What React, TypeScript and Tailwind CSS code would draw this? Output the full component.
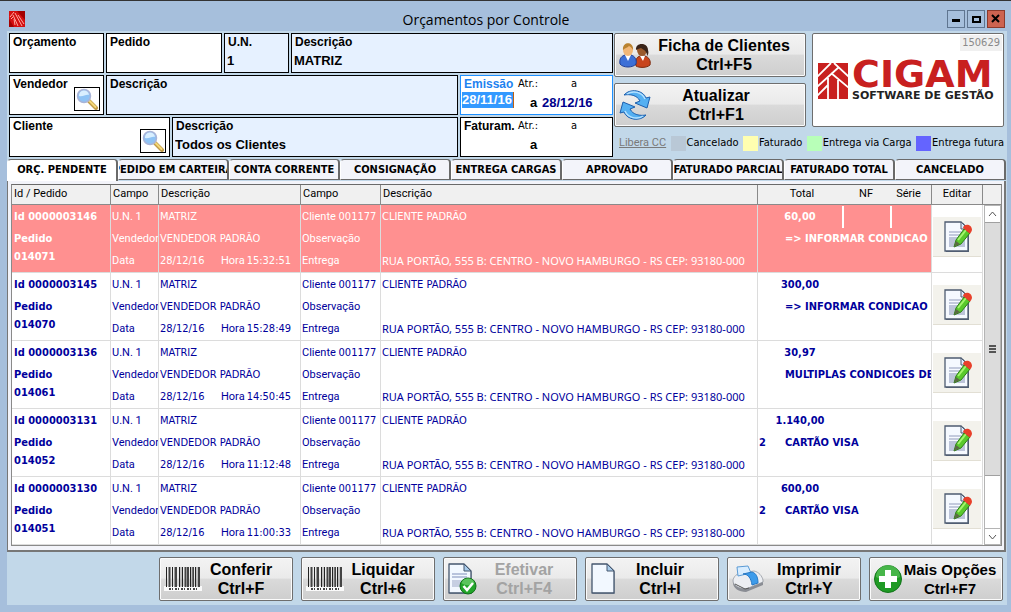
import React from 'react';

type Order = {
  id: string;
  pedido: string;
  hora: string;
  total: string;
  parcela: string;
  condicao: string;
};

const orders: Order[] = [
  { id: '0000003146', pedido: '014071', hora: '15:32:51', total: '60,00', parcela: '', condicao: '=> INFORMAR CONDICAO DE PAGAMENTO' },
  { id: '0000003145', pedido: '014070', hora: '15:28:49', total: '300,00', parcela: '', condicao: '=> INFORMAR CONDICAO DE PAGAMENTO' },
  { id: '0000003136', pedido: '014061', hora: '14:50:45', total: '30,97', parcela: '', condicao: 'MULTIPLAS CONDICOES DE PAGAMENTO' },
  { id: '0000003131', pedido: '014052', hora: '11:12:48', total: '1.140,00', parcela: '2', condicao: 'CARTÃO VISA' },
  { id: '0000003130', pedido: '014051', hora: '11:00:33', total: '600,00', parcela: '2', condicao: 'CARTÃO VISA' },
];

const tabs = [
  'ORÇ. PENDENTE',
  'PEDIDO EM CARTEIRA',
  'CONTA CORRENTE',
  'CONSIGNAÇÃO',
  'ENTREGA CARGAS',
  'APROVADO',
  'FATURADO PARCIAL',
  'FATURADO TOTAL',
  'CANCELADO',
];

const legend = [
  { label: 'Cancelado', color: 'bg-[#b9c8d6]' },
  { label: 'Faturado', color: 'bg-[#ffffb0]' },
  { label: 'Entrega via Carga', color: 'bg-[#b8ffb8]' },
  { label: 'Entrega futura', color: 'bg-[#6464ff]' },
];

/* ---------- icons ---------- */

const AppIcon = () => (
  <svg width="16" height="16" viewBox="0 0 16 16" aria-hidden="true">
    <rect width="16" height="16" fill="#d40f10" />
    <path d="M8 0l8 9V0zM0 8l5 8H0z" fill="#a30000" />
    <path d="M1 6 5 1M4 4l5 11M6 2l7 13M5 8l1 6M9 4l6 9M2 8l2-2" stroke="#ffa8a0" strokeWidth="1" fill="none" />
  </svg>
);

const SearchIcon = () => (
  <svg width="24" height="22" viewBox="0 0 24 22" aria-hidden="true">
    <path d="m14 13 7 7" stroke="#c09a48" strokeWidth="4" strokeLinecap="round" />
    <path d="m14.500 13 6 6" stroke="#f4d878" strokeWidth="2" strokeLinecap="round" />
    <circle cx="9" cy="8" r="6.500" fill="#8ec3f5" stroke="#a9b4d8" strokeWidth="1.500" />
    <path d="M4 8a5 5 0 0 1 10-1c-3-1-6 2-10 1z" fill="#d9efff" />
  </svg>
);

const PeopleIcon = () => (
  <svg width="32" height="26" viewBox="0 0 32 26" aria-hidden="true">
    <path d="M17 24c-1-7 1-9 4-10h5c4 1 6 5 5 9-3 3-11 3-14 1z" fill="#c8451d" stroke="#7d2b10" />
    <path d="m21 14 3 5 2-5z" fill="#fff" />
    <ellipse cx="23" cy="8" rx="5" ry="6" fill="#9a5a2c" />
    <path d="M17 8c-1-8 12-8 12 0 1 3 0 5-1 6 0-5-3-6-6-8-2 1-4 1-5 2z" fill="#3a2419" />
    <path d="M1 22c-1-6 2-8 5-9h6c4 1 6 5 5 9-3 4-13 4-16 0z" fill="#3c6fd6" stroke="#1f3f96" />
    <path d="m6 13 3 6 3-6z" fill="#fff" />
    <ellipse cx="9" cy="8" rx="5" ry="6" fill="#f2b777" />
    <path d="M4 8C3-1 15-1 14 8c-1-2-2-3-4-4-2 2-4 2-6 4z" fill="#b9822f" />
  </svg>
);

const RefreshIcon = () => (
  <svg width="32" height="32" viewBox="0 0 32 32" aria-hidden="true">
    <g fill="#55b0f2" stroke="#1d5fae" strokeWidth="1" strokeLinejoin="round">
      <path d="M5 6C11-1 24 1 27 9l4-1-3 11-12-5 5-2C18 6 11 5 5 6z" />
      <path d="M27 26C21 33 8 31 5 23l-4 1 3-11 12 5-5 2c3 6 10 7 16 6z" />
    </g>
    <path d="M8 5c6-4 15-2 18 5M24 27c-6 4-15 2-18-5" stroke="#b5e1ff" strokeWidth="1.500" fill="none" />
  </svg>
);

const BarcodeIcon = () => (
  <svg width="38" height="26" viewBox="0 0 38 26" className="max-w-none shrink-0" aria-hidden="true">
    <rect x="0" y="20" width="38" height="5" fill="#fafafa" />
    <path d="M2.500 1v20M8.500 1v20M15.500 1v20M18.500 1v20M26.500 1v20M31.500 1v20" stroke="#222" />
    <path d="M5.500 1v20M12 1v20M21.500 1v20M24 1v20M29 1v20M35 1v20" stroke="#444" strokeWidth="2" />
    <path d="M4.500 1v20M10.500 1v20M17 1v20M28 1v20M33 1v20" stroke="#999" />
    <path d="M5 23h28" stroke="#444" strokeWidth="2" strokeDasharray="2 1 1 2" />
  </svg>
);

const Page = () => (
  <>
    <path d="M2 2h15l7 7v22H2z" fill="#8793a3" opacity=".6" />
    <path d="M1 1h15l7 7v22H1z" fill="#f2f8ff" stroke="#44566e" strokeWidth="1.300" strokeLinejoin="round" />
    <path d="M16 1v7h7z" fill="#a8cbea" stroke="#44566e" strokeLinejoin="round" />
  </>
);

const NewIcon = () => (
  <svg width="28" height="32" viewBox="0 0 26 32" aria-hidden="true">
    <Page />
  </svg>
);

const ConfirmIcon = () => (
  <svg width="30" height="32" viewBox="0 0 30 32" aria-hidden="true">
    <Page />
    <path d="M4 11h15M4 14h15" stroke="#b8c3dc" strokeWidth="2" />
    <path d="M4 17h9v7H4z" fill="#c6cfe2" />
    <circle cx="20" cy="23" r="8" fill="#22a52a" stroke="#13701a" />
    <path d="M13.500 20a7 7 0 0 1 13 0c-4 3-9 3-13 0z" fill="#74d274" opacity=".7" />
    <path d="m15.500 23 3.500 4 6-7" stroke="#fff" strokeWidth="2.500" fill="none" />
  </svg>
);

const PrinterIcon = () => (
  <svg width="32" height="28" viewBox="0 0 32 28" aria-hidden="true">
    <path d="M1 18c0-5 4-9 9-9l12-2c5 1 8 5 9 9v4l-17 7C7 27 1 23 1 18z" fill="#8a8d94" />
    <path d="M1 16c0-4 4-8 9-8l12-2c5 1 8 5 9 9v2l-17 7C7 24 1 20 1 16z" fill="#eceef2" stroke="#8a8f98" strokeWidth=".7" />
    <path d="M5 2 16 1l3 7-13 3z" fill="#d8edff" stroke="#5b9bd5" />
    <path d="M11 9c5 0 8 4 9 11l6-2c0-6-2-10-6-11z" fill="#3d9bea" stroke="#2878c4" />
    <path d="m3 19 10 5 4-1" stroke="#555" fill="none" />
  </svg>
);

const PlusIcon = () => (
  <svg width="28" height="28" viewBox="0 0 28 28" aria-hidden="true">
    <circle cx="14" cy="14" r="13.500" fill="#1f9a24" stroke="#13751b" />
    <path d="M2 12a12 12 0 0 1 24 0c-7 4-17 4-24 0z" fill="#62c962" opacity=".6" />
    <path d="M11 5h6v6h6v6h-6v6h-6v-6H5v-6h6z" fill="#fff" />
  </svg>
);

const EditIcon = () => (
  <svg width="30" height="32" viewBox="0 0 30 32" aria-hidden="true">
    <path d="M2 2h17l6 6v23H2z" fill="#59667a" />
    <path d="M1 1h16l7 7v22H1z" fill="#f5f9ff" stroke="#4d5b70" strokeWidth="1.300" />
    <path d="M17 1v7h7z" fill="#dcecff" stroke="#4d5b70" />
    <path d="M5 11h12M5 14h16" stroke="#c3cadd" strokeWidth="2" />
    <path d="M5 16h16v10H5z" fill="#bcc4d9" />
    <path d="m10 26 2-7L20 8l6 4-9 11z" fill="#59c92c" stroke="#2c8215" />
    <path d="m14 19 8-10" stroke="#a4f56e" strokeWidth="2" />
    <path d="m10 26 2-6 4 3z" fill="#5b6b45" />
    <path d="M19 7c1-5 9-4 9 2-1 3-2 4-3 3z" fill="#e8402a" />
  </svg>
);

const LogoMark = () => (
  <svg width="30" height="36" viewBox="0 0 30 36" className="shrink-0" aria-hidden="true">
    <path d="M0 0h30v36H0z" fill="#c8201f" />
    <path
      d="M-1 14 13 0M-1 24 21 4M16 0l15 14M13 10l18 15M10 15v21M20 17v19M-1 33l11-11"
      stroke="#fff"
      strokeWidth="1.800"
      fill="none"
    />
  </svg>
);

/* ---------- building blocks ---------- */

type FieldProps = {
  id: string;
  label: string;
  value?: string;
  readOnly?: boolean;
  search?: boolean;
  className: string;
};

function Field({ id, label, value = '', readOnly = false, search = false, className }: FieldProps) {
  return (
    <div className={`flex h-10 border border-black ${readOnly ? 'bg-[#e6f1ff]' : 'bg-white'} ${className}`}>
      <div className="flex min-w-0 flex-1 flex-col">
        <label htmlFor={id} className="pl-[3px] text-xs font-bold">{label}</label>
        <input
          id={id}
          defaultValue={value}
          readOnly={readOnly}
          className="h-5 w-full bg-transparent pl-0.5 text-[13px] font-bold outline-none"
        />
      </div>
      {search && (
        <button type="button" aria-label={`Pesquisar ${label}`} className="mr-[3px] mb-[3px] h-6 w-[26px] shrink-0 self-end border border-black bg-white">
          <SearchIcon />
        </button>
      )}
    </div>
  );
}

type DateRangeProps = { id: string; label: string; from?: string; to?: string; active?: boolean };

function DateRange({ id, label, from = '', to = '', active = false }: DateRangeProps) {
  return (
    <div className={`h-10 w-[153px] shrink-0 border bg-white ${active ? 'border-[#1e90ff]' : 'border-black'}`}>
      <div className="flex h-4 items-center">
        <label htmlFor={`${id}-de`} className={`w-[57px] pl-[3px] text-xs font-bold ${active ? 'text-[#1e82f0]' : ''}`}>
          {label}
        </label>
        <span className="w-[53px] font-['DejaVu_Sans_Condensed','DejaVu_Sans',sans-serif] text-[11px]">Atr.:</span>
        <span className="font-['DejaVu_Sans_Condensed','DejaVu_Sans',sans-serif] text-[11px]">a</span>
      </div>
      <div className="flex h-[19px] items-end pl-px">
        <input
          id={`${id}-de`}
          defaultValue={from}
          className={`h-4 w-[52px] self-start text-[13px] font-bold outline-none ${active ? 'border-r border-[#c06010] bg-[#3399ff] text-white' : ''}`}
        />
        <label htmlFor={`${id}-ate`} className="w-7 pl-4 text-[13px] leading-4 font-bold">a</label>
        <input id={`${id}-ate`} defaultValue={to} className="h-4 w-14 text-[13px] font-bold text-[#00008b] outline-none" />
      </div>
    </div>
  );
}

type ActionProps = {
  icon: React.ReactNode;
  label: string;
  shortcut: string;
  disabled?: boolean;
  compact?: boolean;
  className: string;
};

function ActionButton({ icon, label, shortcut, disabled = false, compact = false, className }: ActionProps) {
  return (
    <button
      type="button"
      disabled={disabled}
      className={`flex h-11 items-center rounded-[2px] border border-[#6e6e6e] bg-[linear-gradient(#f3f3f3,#eaeaea_48%,#dadada_50%,#cecece)] pl-1 shadow-[inset_0_0_0_1px_#fbfbfb] disabled:text-[#a3a3a3] ${className}`}
    >
      <span className={`flex shrink-0 items-center ${compact ? 'w-7' : 'w-8'}`}>{icon}</span>
      <span className={`flex-1 text-center leading-[19px] font-bold whitespace-nowrap ${compact ? 'text-[15px]' : 'text-base'}`}>
        {label}
        <br />
        {shortcut}
      </span>
    </button>
  );
}

function TitleBar() {
  return (
    <header className="flex h-[30px] items-center pr-[6px] pl-[9px]">
      <div className="pt-1.5"><AppIcon /></div>
      <h1 className="flex-1 pt-2 text-center font-['Open_Sans',sans-serif] text-sm leading-6">Orçamentos por Controle</h1>
      <div className="flex gap-0.5 pt-1.5">
        <button type="button" aria-label="Minimizar" className="flex size-[18px] items-center justify-center border border-[#5f7590]">
          <svg width="10" height="10"><path d="M1 5h8v3H1z" /></svg>
        </button>
        <button type="button" aria-label="Maximizar" className="flex size-[18px] items-center justify-center border border-[#5f7590]">
          <svg width="10" height="10"><path d="M1 2h9v7H1zM3 4v3h5V4z" fillRule="evenodd" /></svg>
        </button>
        <button type="button" aria-label="Fechar" className="flex size-[18px] items-center justify-center border border-[#8c3a2c] bg-[#cd6350]">
          <svg width="10" height="10"><path d="m1 1 7 7M8 1 1 8" stroke="#000" strokeWidth="2" /></svg>
        </button>
      </div>
    </header>
  );
}

function Filters() {
  return (
    <div className="flex gap-px pr-[3px] pl-0.5">
      <div className="flex min-w-0 flex-1 flex-col gap-0.5">
        <div className="flex gap-0.5">
          <Field id="orcamento" label="Orçamento" className="w-[95px]" />
          <Field id="pedido" label="Pedido" className="w-[116px]" />
          <Field id="un" label="U.N." value="1" readOnly className="w-[65px]" />
          <Field id="un-desc" label="Descrição" value="MATRIZ" readOnly className="flex-1" />
        </div>
        <div className="flex gap-0.5">
          <Field id="vendedor" label="Vendedor" search className="w-[95px]" />
          <Field id="vendedor-desc" label="Descrição" readOnly className="flex-1" />
          <DateRange id="emissao" label="Emissão" from="28/11/16" to="28/12/16" active />
        </div>
        <div className="flex gap-0.5">
          <Field id="cliente" label="Cliente" search className="w-[161px]" />
          <Field id="cliente-desc" label="Descrição" value="Todos os Clientes" readOnly className="flex-1" />
          <DateRange id="faturam" label="Faturam." />
        </div>
      </div>

      <div className="w-[390px] shrink-0">
        <div className="flex gap-1.5">
          <div className="flex flex-col gap-1.5">
            <ActionButton icon={<PeopleIcon />} label="Ficha de Clientes" shortcut="Ctrl+F5" className="w-48 pr-2" />
            <ActionButton icon={<RefreshIcon />} label="Atualizar" shortcut="Ctrl+F1" className="w-48 pr-6" />
          </div>
          <div className="flex flex-1 flex-col rounded-[2px] border border-[#6e6e6e] bg-white">
            <span className="mt-px mr-px self-end bg-[#f0f0f0] px-0.5 font-['DejaVu_Sans_Condensed','DejaVu_Sans',sans-serif] text-[11px] leading-4 text-[#8a8a8a]">150629</span>
            <div className="mt-2 flex items-center gap-1 pl-[5px]">
              <LogoMark />
              <div className="font-['DejaVu_Sans',sans-serif] font-bold">
                <div className="text-[38px] leading-[30px] text-[#c8201f]">CIGAM</div>
                <div className="text-[11px] leading-[13px] whitespace-nowrap text-[#222]">SOFTWARE DE GESTÃO</div>
              </div>
            </div>
          </div>
        </div>
        <div className="mt-2 flex items-center justify-between pl-[5px] font-['DejaVu_Sans_Condensed','DejaVu_Sans',sans-serif] text-[11px] leading-4">
          <a href="#libera" className="font-[Roboto,sans-serif] text-[11px] text-[#7a7a7a] underline">Libera CC</a>
          {legend.map((item) => (
            <span key={item.label} className="flex items-center gap-px">
              <span className={`size-[15px] ${item.color}`} />
              {item.label}
            </span>
          ))}
        </div>
      </div>
    </div>
  );
}

function TabBar() {
  return (
    <div role="tablist" className="mr-px flex h-[22px] items-start">
      {tabs.map((tab, i) => (
        <button
          key={tab}
          type="button"
          role="tab"
          aria-selected={i === 0}
          className={`flex min-w-0 flex-1 basis-0 justify-center overflow-hidden rounded-t-[4px] border-t border-r-2 border-l border-[#6a6a6a] border-l-white font-['DejaVu_Sans_Condensed','DejaVu_Sans',sans-serif] text-[11px] font-bold whitespace-nowrap ${
            i === 0 ? 'h-[22px] bg-white pt-px leading-[18px]' : 'h-[21px] border-b bg-[#f3f4fa] leading-5'
          }`}
        >
          {tab}
        </button>
      ))}
    </div>
  );
}

const cell = 'border-r border-b border-[#dcdcdc] px-0 pt-px pb-0 align-top';

function OrderRow({ order, selected }: { order: Order; selected: boolean }) {
  const fill = selected ? 'bg-[#ff9090] bg-clip-padding' : '';
  return (
    <tr className={`h-[68px] leading-[22px] ${selected ? 'text-white' : 'text-[#00009c]'}`}>
      <td className={`${cell} ${fill} pl-0.5 font-['DejaVu_Sans_Condensed','DejaVu_Sans',sans-serif] font-bold`}>
        <div>Id {order.id}</div>
        <div>Pedido</div>
        <div className="leading-[14px]">{order.pedido}</div>
      </td>
      <td className={`${cell} ${fill} overflow-hidden pl-px`}>
        <div>U.N. 1</div>
        <div>Vendedor</div>
        <div>Data</div>
      </td>
      <td className={`${cell} ${fill} pl-px font-['DejaVu_Sans_Condensed','DejaVu_Sans',sans-serif]`}>
        <div>MATRIZ</div>
        <div>VENDEDOR PADRÃO</div>
        <div className="flex">
          <span className="w-[61px]">28/12/16</span>
          <span className="font-[Roboto,sans-serif]">Hora</span>
          <span className="pl-0.5">{order.hora}</span>
        </div>
      </td>
      <td className={`${cell} ${fill} pl-px`}>
        <div className="h-[22px] whitespace-nowrap">
          Cliente <span className="font-['DejaVu_Sans_Condensed','DejaVu_Sans',sans-serif]">001177</span>
        </div>
        <div>Observação</div>
        <div>Entrega</div>
      </td>
      <td className={`${cell} ${fill} pl-px`}>
        <div className="font-['DejaVu_Sans_Condensed','DejaVu_Sans',sans-serif]">CLIENTE PADRÃO</div>
        <div className="mt-[22px] overflow-hidden font-['Noto_Sans',sans-serif] whitespace-nowrap">
          RUA PORTÃO, 555 B: CENTRO - NOVO HAMBURGO - RS CEP: 93180-000
        </div>
      </td>
      <td className={`${cell} ${fill} font-['DejaVu_Sans_Condensed','DejaVu_Sans',sans-serif] font-bold`}>
        <div className="grid h-[22px] grid-cols-[86px_48px_1fr] divide-x-2 divide-white text-center">
          <span>{order.total}</span>
          <span />
          <span />
        </div>
        <div className="flex overflow-hidden whitespace-nowrap">
          <span className="w-[27px] shrink-0 pl-px">{order.parcela}</span>
          {order.condicao}
        </div>
      </td>
      <td className={cell}>
        <button type="button" aria-label={`Editar pedido ${order.pedido}`} className="mt-[11px] ml-px flex h-10 w-12 items-center justify-center border-b border-[#e2dfd4] bg-[#f3f2ec] pl-1">
          <EditIcon />
        </button>
      </td>
    </tr>
  );
}

function OrderGrid() {
  const head = 'border-r border-b border-[#8a8a8a] p-0 font-normal';
  return (
    <div className="mr-0.5 ml-[3px] flex border border-[#8a8a8a] border-t-[#6a6a6a] bg-white">
      <table className="w-full min-w-0 flex-1 table-fixed border-separate border-spacing-0 font-[Roboto,sans-serif] text-[11px]">
        <colgroup>
          <col className="w-[99px]" />
          <col className="w-12" />
          <col className="w-[142px]" />
          <col className="w-20" />
          <col />
          <col className="w-[174px]" />
          <col className="w-[51px]" />
        </colgroup>
        <thead>
          <tr className="h-5 bg-[#f0f0f0]">
            <th className={`${head} pl-0.5 text-left`}>Id / Pedido</th>
            <th className={`${head} pl-0.5 text-left`}>Campo</th>
            <th className={`${head} pl-0.5 text-left`}>Descrição</th>
            <th className={`${head} pl-0.5 text-left`}>Campo</th>
            <th className={`${head} pl-0.5 text-left`}>Descrição</th>
            <th className={head}>
              <div className="grid grid-cols-[88px_40px_1fr] text-center">
                <span>Total</span>
                <span>NF</span>
                <span>Série</span>
              </div>
            </th>
            <th className={`${head} text-center`}>Editar</th>
          </tr>
        </thead>
        <tbody>
          {orders.map((order, i) => (
            <OrderRow key={order.id} order={order} selected={i === 0} />
          ))}
        </tbody>
      </table>

      <div className="flex w-[18px] shrink-0 flex-col">
        <div className="h-5 border-b border-[#8a8a8a] bg-[#f0f0f0]" />
        <div className="ml-px flex flex-1 flex-col border border-[#b4b4b4]">
          <button type="button" aria-label="Subir" className="flex h-4 items-center justify-center">
            <svg width="9" height="6"><path d="m1 5 3.500-4L8 5" stroke="#555" fill="none" /></svg>
          </button>
          <div className="flex h-[254px] items-center justify-center border-y border-[#a0a0a0] bg-[#dcdcdc]">
            <svg width="7" height="8"><path d="M0 1h7M0 4h7M0 7h7" stroke="#555" strokeWidth="2" /></svg>
          </div>
          <button type="button" aria-label="Descer" className="mt-auto flex h-4 items-center justify-center border-t border-[#b4b4b4]">
            <svg width="9" height="6"><path d="m1 1 3.500 4L8 1" stroke="#555" fill="none" /></svg>
          </button>
        </div>
      </div>
    </div>
  );
}

export default function App() {
  return (
    <div className="min-h-screen border-t border-[#333] bg-[#a6bfdc] font-['Liberation_Sans',sans-serif] text-black">
      <TitleBar />
      <main className="mr-1 ml-[7px] bg-[#c2d8e9] pt-0.5 pb-1">
        <Filters />
        <div className="mt-0.5">
          <TabBar />
          <div className="mr-px border-r-2 border-b-2 border-l border-[#777] bg-[#f3f4fa] pt-[3px] pb-1">
            <OrderGrid />
          </div>
        </div>
        <div className="mt-[5px] flex justify-end gap-2 pr-1">
          <ActionButton icon={<BarcodeIcon />} label="Conferir" shortcut="Ctrl+F" className="w-[134px] pr-1.5" />
          <ActionButton icon={<BarcodeIcon />} label="Liquidar" shortcut="Ctrl+6" className="w-[134px] pr-1.5" />
          <ActionButton icon={<ConfirmIcon />} label="Efetivar" shortcut="Ctrl+F4" disabled className="w-[134px] pr-2" />
          <ActionButton icon={<NewIcon />} label="Incluir" shortcut="Ctrl+I" className="w-[134px] pr-5" />
          <ActionButton icon={<PrinterIcon />} label="Imprimir" shortcut="Ctrl+Y" className="w-[134px] pr-1.5" />
          <ActionButton icon={<PlusIcon />} label="Mais Opções" shortcut="Ctrl+F7" compact className="w-[134px] pr-1" />
        </div>
      </main>
    </div>
  );
}
